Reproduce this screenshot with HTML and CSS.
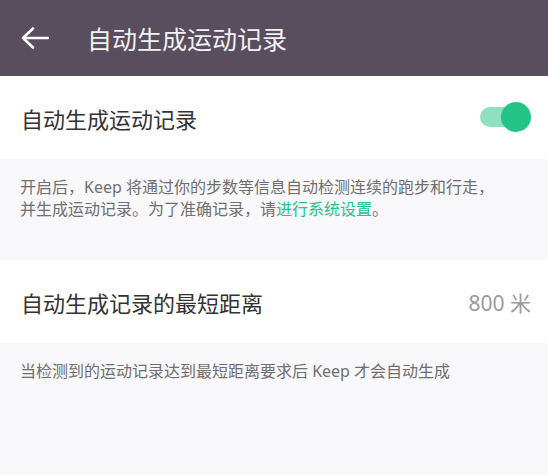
FILE: index.html
```html
<!DOCTYPE html>
<html lang="zh-CN">
<head>
    <meta charset="UTF-8">
    <meta name="viewport" content="width=device-width, initial-scale=1.0">
    <title>自动生成运动记录</title>
    <link rel="stylesheet" href="styles.css">
</head>
<body>
    <div class="page">
        <!-- Шапка -->
        <header class="topbar">
            <span class="back">
                <svg width="28" height="22" viewBox="0 0 28 22">
                    <path d="M2 11H27M12 1.5L2 11l10 9.5" fill="none" stroke="#fff" stroke-width="2.6" stroke-linecap="round" stroke-linejoin="round"/>
                </svg>
            </span>
            <h1 class="title">自动生成运动记录</h1>
        </header>

        <div class="row">
            <span class="row-label">自动生成运动记录</span>
            <span class="switch on"><span class="knob"></span></span>
        </div>

        <div class="note note-tall">
            开启后，Keep 将通过你的步数等信息自动检测连续的跑步和行走，<br>并生成运动记录。为了准确记录，请<a href="#" class="link">进行系统设置</a>。
        </div>

        <div class="row">
            <span class="row-label">自动生成记录的最短距离</span>
            <span class="row-value">800 米</span>
        </div>

        <div class="note note-bottom">
            当检测到的运动记录达到最短距离要求后 Keep 才会自动生成
        </div>
    </div>
</body>
</html>
```

FILE: styles.css
```css
body {
    margin: 0;
    font-family: "Noto Sans", "Noto Sans CJK SC", sans-serif;
    background-color: #f8f7fa;
    color: #333;
}

.page {
    width: 548px;
    height: 475px;
    overflow: hidden;
    display: flex;
    flex-direction: column;
}

/* Шапка */
.topbar {
    height: 76px;
    background-color: #584e5e;
    display: flex;
    align-items: center;
    padding: 0 21px;
    box-sizing: border-box;
}

.back {
    display: flex;
    width: 28px;
    margin-right: 38px;
}

.title {
    margin: 0;
    font-size: 25px;
    font-weight: 400;
    color: #f3f1f4;
}

/* Строки */
.row {
    height: 83px;
    background-color: #fff;
    display: flex;
    align-items: center;
    justify-content: space-between;
    padding: 0 17px 0 21px;
}

.row-label {
    font-size: 22px;
    color: #333;
}

.row-value {
    font-size: 21px;
    color: #9a9a9a;
}

/* Переключатель */
.switch {
    position: relative;
    width: 46px;
    height: 20px;
    border-radius: 10px;
    background-color: #8fdfc1;
    margin-top: -2px;
    margin-right: 5px;
}

.switch .knob {
    position: absolute;
    right: -5px;
    top: -5px;
    width: 30px;
    height: 30px;
    border-radius: 50%;
    background-color: #22c487;
}

/* Подписи */
.note {
    font-size: 16px;
    line-height: 22px;
    color: #6f6f6f;
    padding: 0 20px;
    white-space: nowrap;
}

.note-tall {
    height: 101px;
    padding-top: 17px;
    box-sizing: border-box;
}

.note-bottom {
    flex: 1;
    padding-top: 17px;
}

.link {
    color: #24c38a;
    text-decoration: none;
}
```
